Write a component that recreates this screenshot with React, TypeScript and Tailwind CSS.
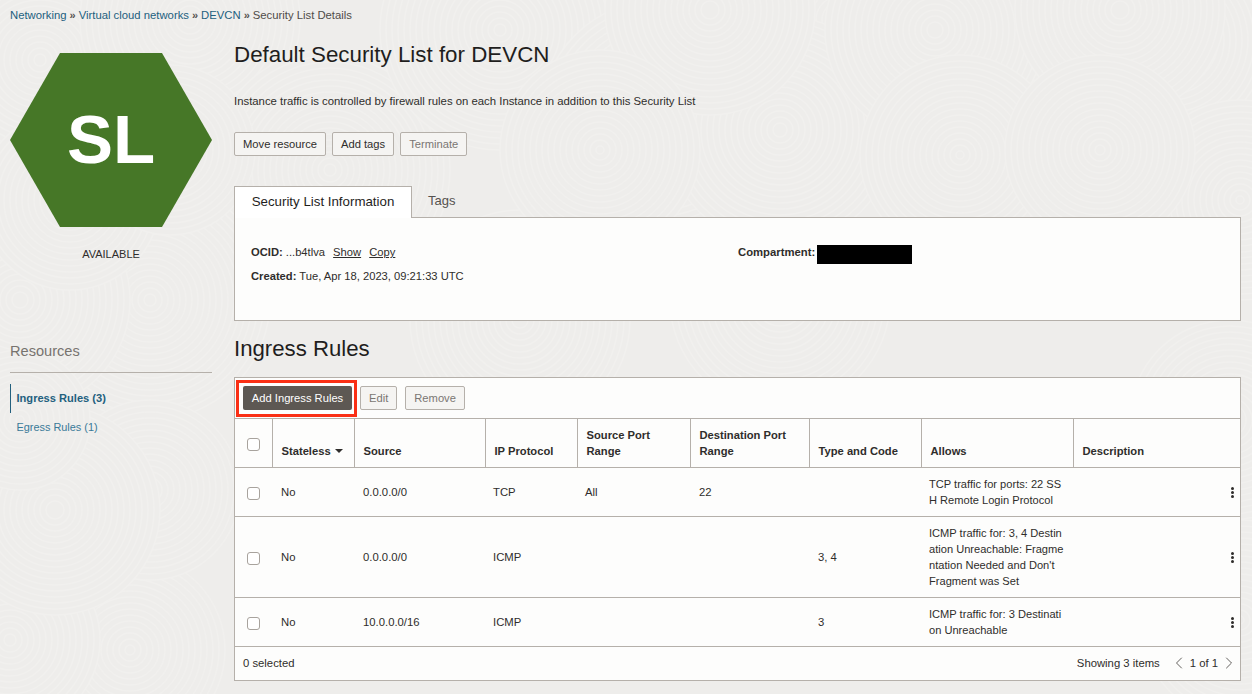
import { ChevronLeft, ChevronRight } from 'lucide-react'

const COLS = [37, 82, 131, 92, 113, 119, 112, 152, 167]

const RULES = [
  {
    source: '0.0.0.0/0',
    protocol: 'TCP',
    sourcePort: 'All',
    destPort: '22',
    typeCode: '',
    allows: ['TCP traffic for ports: 22 SS', 'H Remote Login Protocol'],
    height: 'h-[49px]',
  },
  {
    source: '0.0.0.0/0',
    protocol: 'ICMP',
    sourcePort: '',
    destPort: '',
    typeCode: '3, 4',
    allows: ['ICMP traffic for: 3, 4 Destin', 'ation Unreachable: Fragme', "ntation Needed and Don't", 'Fragment was Set'],
    height: 'h-[81px]',
  },
  {
    source: '10.0.0.0/16',
    protocol: 'ICMP',
    sourcePort: '',
    destPort: '',
    typeCode: '3',
    allows: ['ICMP traffic for: 3 Destinati', 'on Unreachable'],
    height: 'h-[49px]',
  },
]

// swirl patches of the page background, painted back to front
const SWIRLS = [
  [40, 60, 120], [190, 20, 110], [330, 170, 120], [500, 30, 120], [660, 120, 120], [840, 20, 120],
  [1000, 170, 120], [1170, 40, 120], [1240, 200, 100], [150, 300, 120], [20, 300, 110], [520, 320, 110],
  [780, 300, 110], [1230, 420, 100], [1240, 620, 100], [130, 650, 95], [10, 640, 90], [150, 490, 90],
  [55, 510, 105], [780, 130, 115], [710, 10, 105], [935, 30, 110], [1120, 10, 105], [600, 150, 100],
  [960, 155, 100], [1100, 150, 95], [70, 200, 90], [170, 150, 85], [20, 420, 70],
]

function Swirl({ cx, cy, r }: { cx: number; cy: number; r: number }) {
  const rings = []
  for (let ring = r; ring > 3; ring -= 6) rings.push(ring)
  return (
    <g>
      <circle cx={cx} cy={cy} r={r} fill="#eeedeb" stroke="none" />
      {rings.map(ring => (
        <circle key={ring} cx={cx} cy={cy} r={ring} />
      ))}
    </g>
  )
}

function Background() {
  return (
    <svg className="absolute inset-0 w-full h-full pointer-events-none" viewBox="0 0 1252 694" fill="none" stroke="#f1f0ee" strokeWidth="1.5">
      {SWIRLS.map(([cx, cy, r]) => (
        <Swirl key={`${cx}-${cy}`} cx={cx} cy={cy} r={r} />
      ))}
    </svg>
  )
}

function Checkbox() {
  return <span className="inline-block w-[13px] h-[13px] rounded-[3px] border border-[#a8a39d] bg-white align-middle" />
}

function Btn({ children, disabled }: { children: React.ReactNode; disabled?: boolean }) {
  return (
    <button
      type="button"
      className={`h-[24px] px-2 rounded-[2px] border border-[#b5b0aa] bg-[#f5f4f2] text-[11.2px] ${disabled ? 'text-[#7a7672]' : 'text-[#2f2d2b]'}`}
    >
      {children}
    </button>
  )
}

function HeaderCell({ children, last }: { children: React.ReactNode; last?: boolean }) {
  return (
    <th className={`pl-[9px] pb-[8px] align-bottom text-left text-[11.2px] leading-[16px] font-bold text-[#2f2d2b] border-b border-[#b5b0aa] ${last ? '' : 'border-r'}`}>
      {children}
    </th>
  )
}

function Sep() {
  return <span className="mx-[3px] text-[11px] font-bold leading-none text-[#55524f]">»</span>
}

export default function App() {
  return (
    <div className="relative h-[694px] overflow-hidden bg-[#eeedeb] text-[#2f2d2b] font-['Liberation_Sans',Arial,sans-serif] text-[11.3px]">
      <Background />
      <div className="relative">
        <nav className="flex items-center h-[14px] mt-[8px] ml-[10px] text-[11.3px]">
          <a className="text-[#23607e]">Networking</a>
          <Sep />
          <a className="text-[#23607e]">Virtual cloud networks</a>
          <Sep />
          <a className="text-[#23607e]">DEVCN</a>
          <Sep />
          <span className="text-[#4f4c49]">Security List Details</span>
        </nav>

        <div className="flex mt-[8px]">
          {/* left column */}
          <aside className="w-[202px] ml-[10px] shrink-0">
            <div className="mt-[23px] relative w-[202px] h-[175px]">
              <svg viewBox="0 0 202 175" className="w-full h-full">
                <polygon points="50,0 152,0 202,87 152,174 50,174 0,87" fill="#467727" />
              </svg>
              <div className="absolute inset-0 flex items-center justify-center text-[69px] leading-none font-bold text-white pb-[3px]">SL</div>
            </div>
            <div className="mt-[18px] text-center text-[11px] text-[#2f2d2b]">AVAILABLE</div>

            <div className="mt-[79px] pb-[12px] border-b border-[#b5b0aa] text-[14.6px] leading-[18px] font-light text-[#77736f]">Resources</div>
            <ul className="mt-[11px]">
              <li className="h-[29px] flex items-center pl-[5.5px] border-l border-[#23607e] text-[11.1px] font-bold text-[#23607e]">Ingress Rules (3)</li>
              <li className="h-[29px] flex items-center pl-[6.5px] text-[10.9px] text-[#3a7a99]">Egress Rules (1)</li>
            </ul>
          </aside>

          {/* main column */}
          <main className="ml-[22px] w-[1007px]">
            <h1 className="mt-[11px] text-[22.35px] leading-[28px] text-[#1f1e1d]">Default Security List for DEVCN</h1>
            <p className="mt-[25px] leading-[14px] text-[11.35px]">Instance traffic is controlled by firewall rules on each Instance in addition to this Security List</p>
            <div className="flex gap-[6px] mt-[24px]">
              <Btn>Move resource</Btn>
              <Btn>Add tags</Btn>
              <Btn disabled>Terminate</Btn>
            </div>

            <div className="flex mt-[30px] relative z-10">
              <div className="w-[178px] h-[32px] flex items-center justify-center pb-[1px] bg-white border border-b-0 border-[#b5b0aa] text-[13.3px] text-[#1f1e1d]">Security List Information</div>
              <div className="ml-[16px] pt-[5px] text-[13px] text-[#55524f]">Tags</div>
            </div>
            <div className="h-[104px] -mt-px bg-[#fdfdfc] border border-[#b5b0aa] flex pl-[16px] pt-[27px]">
              <div className="w-[487px] text-[11.2px]">
                <div className="leading-[14px]">
                  <b>OCID:</b> ...b4tlva <u className="ml-[5px]">Show</u> <u className="ml-[5px]">Copy</u>
                </div>
                <div className="mt-[10px] leading-[14px]">
                  <b>Created:</b> Tue, Apr 18, 2023, 09:21:33 UTC
                </div>
              </div>
              <div className="flex items-start">
                <b className="leading-[14px]">Compartment:</b>
                <span className="ml-[2px] w-[95px] h-[19px] bg-black" />
              </div>
            </div>

            <h2 className="mt-[14px] text-[22.2px] leading-[28px] text-[#1f1e1d]">Ingress Rules</h2>

            <div className="mt-[14px] bg-[#fdfdfc] border border-[#b5b0aa]">
              <div className="h-[41px] flex items-center gap-[8px] pl-[8px] border-b border-[#b5b0aa]">
                <div className="relative">
                  <button type="button" className="h-[24px] w-[109px] rounded-[2px] bg-[#5d5853] text-[11.2px] text-white">Add Ingress Rules</button>
                  <span className="absolute -left-[7px] -top-[6px] -right-[5px] -bottom-[7px] border-[3px] border-[#fa2f14]" />
                </div>
                <Btn disabled>Edit</Btn>
                <Btn disabled>Remove</Btn>
              </div>

              <table className="w-full table-fixed border-collapse">
                <colgroup>
                  {COLS.map((w, i) => (
                    <col key={i} style={{ width: w }} />
                  ))}
                </colgroup>
                <thead>
                  <tr className="h-[48px]">
                    <th className="pb-[14px] align-bottom border-b border-r border-[#b5b0aa]">
                      <Checkbox />
                    </th>
                    <HeaderCell>
                      Stateless <span className="inline-block ml-[1px] mb-[2px] border-x-[4px] border-x-transparent border-t-[4px] border-t-[#2f2d2b]" />
                    </HeaderCell>
                    <HeaderCell>Source</HeaderCell>
                    <HeaderCell>IP Protocol</HeaderCell>
                    <HeaderCell>Source Port<br />Range</HeaderCell>
                    <HeaderCell>Destination Port<br />Range</HeaderCell>
                    <HeaderCell>Type and Code</HeaderCell>
                    <HeaderCell>Allows</HeaderCell>
                    <HeaderCell last>Description</HeaderCell>
                  </tr>
                </thead>
                <tbody>
                  {RULES.map((rule, i) => (
                    <tr key={i} className={`${rule.height} border-b border-[#b5b0aa]`}>
                      <td className="text-center pt-[2px]"><Checkbox /></td>
                      <td className="pl-[9px] pt-[2px]">No</td>
                      <td className="pl-[9px] pt-[2px]">{rule.source}</td>
                      <td className="pl-[8px] pt-[2px]">{rule.protocol}</td>
                      <td className="pl-[8px] pt-[2px]">{rule.sourcePort}</td>
                      <td className="pl-[9px] pt-[2px]">{rule.destPort}</td>
                      <td className="pl-[9px] pt-[2px]">{rule.typeCode}</td>
                      <td className="pl-[8px] leading-[16px] text-[11.1px] whitespace-nowrap">
                        {rule.allows.map(line => (
                          <div key={line}>{line}</div>
                        ))}
                      </td>
                      <td className="pr-[6px] text-right">
                        <span className="inline-flex flex-col gap-[1px] align-middle">
                          <span className="w-[3px] h-[3px] rounded-full bg-[#2f2d2b]" />
                          <span className="w-[3px] h-[3px] rounded-full bg-[#2f2d2b]" />
                          <span className="w-[3px] h-[3px] rounded-full bg-[#2f2d2b]" />
                        </span>
                      </td>
                    </tr>
                  ))}
                </tbody>
              </table>

              <div className="h-[33px] flex items-center justify-between pl-[8px] pr-[1px]">
                <span>0 selected</span>
                <span className="flex items-center">
                  <span>Showing 3 items</span>
                  <ChevronLeft className="ml-[9px] w-[20px] h-[20px] text-[#55524f]" strokeWidth={1.1} />
                  <span className="mx-[1px]">1 of 1</span>
                  <ChevronRight className="w-[20px] h-[20px] text-[#55524f]" strokeWidth={1.1} />
                </span>
              </div>
            </div>
          </main>
        </div>
      </div>
    </div>
  )
}
